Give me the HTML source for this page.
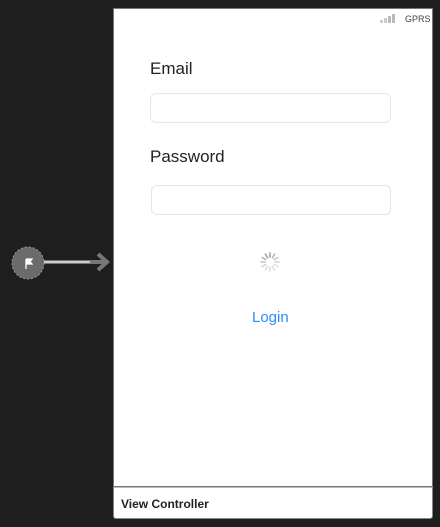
<!DOCTYPE html><html><head><style>
body{margin:0;width:440px;height:527px;background:#1e1e1e;position:relative;overflow:hidden;font-family:"Liberation Sans",sans-serif}
.a{position:absolute}
.phone{left:113px;top:8px;width:320px;height:479px;background:#fff;border:1px solid #777;box-sizing:border-box}
.lbl{font-size:17px;color:#222}
.fld{border:1px solid #e6e6e6;border-radius:6px;background:#fff}
</style></head><body>
<div class="a phone"></div>
<div class="a" style="left:380px;top:14px;font-size:0">
<span style="display:inline-block;width:3px;height:3px;background:#ccc;margin-right:1px;vertical-align:bottom"></span><span style="display:inline-block;width:3px;height:5px;background:#ccc;margin-right:1px;vertical-align:bottom"></span><span style="display:inline-block;width:3px;height:7px;background:#bbb;margin-right:1px;vertical-align:bottom"></span><span style="display:inline-block;width:3px;height:9px;background:#bbb;vertical-align:bottom"></span></div>
<div class="a" style="left:405px;top:14px;font-size:9px;color:#444">GPRS</div>
<div class="a lbl" style="left:150px;top:59px">Email</div>
<div class="a fld" style="left:150px;top:93px;width:241px;height:30px;box-sizing:border-box"></div>
<div class="a lbl" style="left:150px;top:147px">Password</div>
<div class="a fld" style="left:151px;top:185px;width:240px;height:30px;box-sizing:border-box"></div>
<svg class="a" style="left:259px;top:251px" width="22" height="22" viewBox="-11 -11 22 22">
<g stroke-width="1.8" stroke-linecap="round">
<line x1="0" y1="-5" x2="0" y2="-9" stroke="#aaa" transform="rotate(0)"/>
<line x1="0" y1="-5" x2="0" y2="-9" stroke="#bbb" transform="rotate(30)"/>
<line x1="0" y1="-5" x2="0" y2="-9" stroke="#ccc" transform="rotate(60)"/>
<line x1="0" y1="-5" x2="0" y2="-9" stroke="#d8d8d8" transform="rotate(90)"/>
<line x1="0" y1="-5" x2="0" y2="-9" stroke="#e2e2e2" transform="rotate(120)"/>
<line x1="0" y1="-5" x2="0" y2="-9" stroke="#e2e2e2" transform="rotate(150)"/>
<line x1="0" y1="-5" x2="0" y2="-9" stroke="#e2e2e2" transform="rotate(180)"/>
<line x1="0" y1="-5" x2="0" y2="-9" stroke="#e2e2e2" transform="rotate(210)"/>
<line x1="0" y1="-5" x2="0" y2="-9" stroke="#d8d8d8" transform="rotate(240)"/>
<line x1="0" y1="-5" x2="0" y2="-9" stroke="#ccc" transform="rotate(270)"/>
<line x1="0" y1="-5" x2="0" y2="-9" stroke="#bbb" transform="rotate(300)"/>
<line x1="0" y1="-5" x2="0" y2="-9" stroke="#aaa" transform="rotate(330)"/>
</g></svg>
<div class="a" style="left:252px;top:309px;font-size:15px;color:#2f8cf5">Login</div>
<div class="a" style="left:113px;top:487px;width:320px;height:32px;background:#fff;border:1px solid #888;border-top:1px solid #bbb;box-sizing:border-box;border-radius:0 0 3px 3px"></div>
<div class="a" style="left:121px;top:497px;font-size:12px;font-weight:bold;color:#222">View Controller</div>
<svg class="a" style="left:10px;top:246px" width="104" height="34">
<circle cx="18" cy="17" r="16" fill="#6b6b6b" stroke="#999" stroke-dasharray="2 2"/>
<line x1="34" y1="16" x2="80" y2="16" stroke="#ccc" stroke-width="3"/>
<line x1="80" y1="16" x2="96" y2="16" stroke="#777" stroke-width="4"/>
<path d="M88 8 L97 16 L88 24" stroke="#777" stroke-width="4" fill="none"/>
<path d="M16 13 v10 M16 13 h6 l-2 2.5 l2 2.5 h-6" stroke="#fff" stroke-width="1.3" fill="#fff"/>
</svg>
</body></html>
